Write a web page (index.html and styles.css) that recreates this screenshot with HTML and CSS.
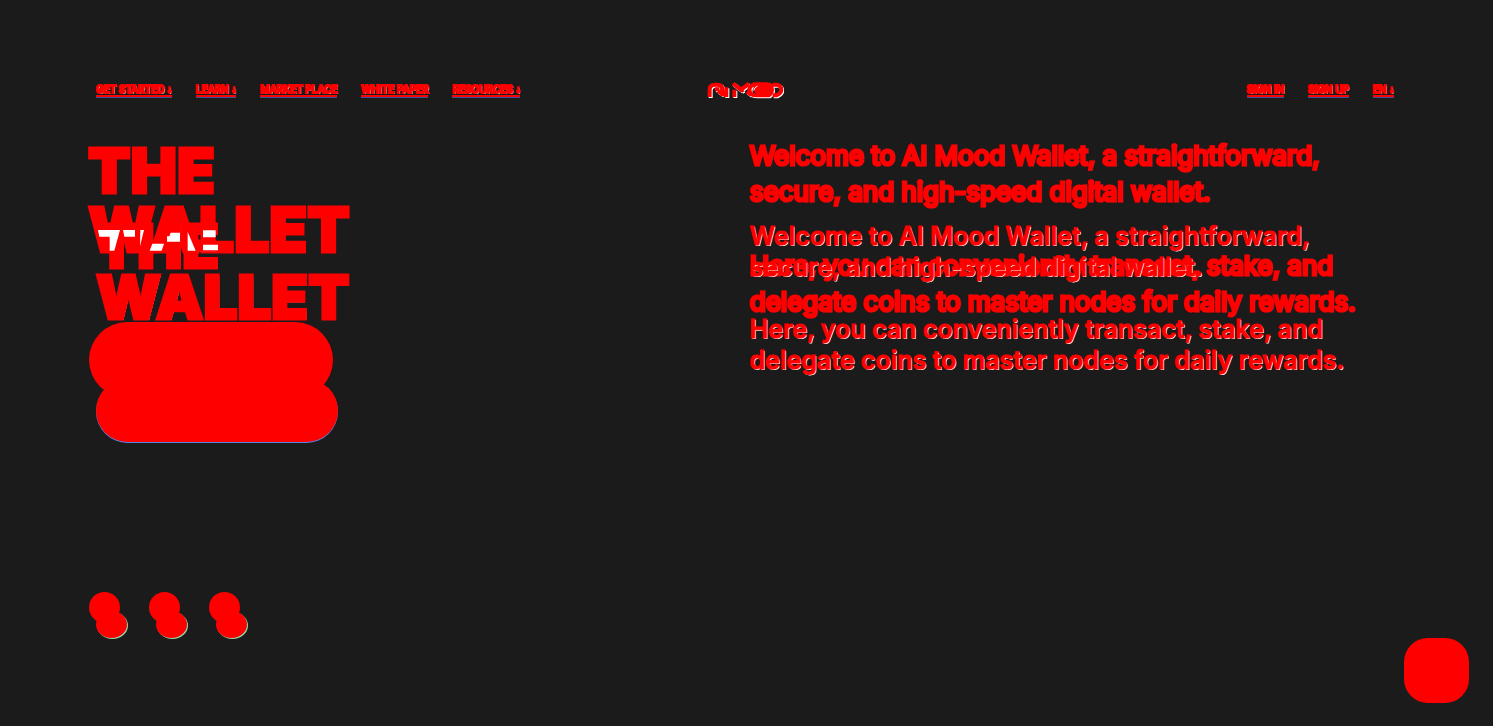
FILE: index.html
```html
<!DOCTYPE html>
<html lang="en">
<head>
<meta charset="utf-8">
<meta name="viewport" content="width=device-width, initial-scale=1">
<title>Ai Mood Wallet</title>
<link rel="stylesheet" href="styles.css">
</head>
<body>
<header class="bar">
  <nav class="nav" aria-label="Main">
    <a href="#start">GET STARTED <span class="arrow">↓</span></a>
    <a href="#learn">LEARN <span class="arrow">↓</span></a>
    <a href="#market">MARKET PLACE</a>
    <a href="#paper">WHITE PAPER</a>
    <a href="#resources">RESOURCES <span class="arrow">↓</span></a>
  </nav>
  <a class="logo" href="#home" aria-label="Ai Mood">
    <svg width="78" height="18" viewBox="48 34 234 54" fill="none">
      <defs>
        <g id="mark">
          <path d="M59 82V60Q59 45 75 45H83Q97 45 97 60V68M75 59H88M84 64L100 75"/>
          <path d="M109 82V53M133 82V60M129 42L153 60L177 42M153 64L160 60M171 66L184 76"/>
          <path d="M192 44Q178 50 178 60Q180 77 200 77H236Q246 70 246 60Q246 44 230 44Z"/>
          <path d="M248 45H260Q274 49 274 60T259 77H248"/>
        </g>
      </defs>
      <use href="#mark" class="mark-edge" x="3" y="3"/>
      <use href="#mark" class="mark"/>
      <path d="M84 62H109V80H92ZM192 44H230Q246 46 246 60T236 77H200L190 60Z" fill="#f00"/>
      <path d="M203 49Q193 52 191 63" stroke="#fff" stroke-width="3"/>
    </svg>
  </a>
  <nav class="nav account" aria-label="Account">
    <a href="#signin">SIGN IN</a>
    <a href="#signup">SIGN UP</a>
    <a href="#lang">EN <span class="arrow">↓</span></a>
  </nav>
</header>
<main class="hero">
  <section class="lead">
    <div class="stack">
      <h1 class="title">THE<br>WALLET</h1>
      <div class="title title-echo" aria-hidden="true">THE<br>WALLET</div>
      <svg class="overlap" width="120" height="22" viewBox="54 286 360 66" aria-hidden="true">
        <path fill="#fff" d="M54 286H120L103 348H89V306H58ZM129 286H165V306H133ZM181 286H192L180 335ZM217 327H252L245 348H209ZM272 294H300V321H261V305H268ZM323 291L347 348H323Z"/>
        <path fill="#fff" d="M369 287H407V308H369ZM369 330H414V347H369Z"/>
      </svg>
    </div>
    <div class="actions">
      <button class="pill" type="button" aria-label="Get the wallet"></button>
      <span class="pill-echo"></span>
    </div>
    <div class="socials">
      <a class="social" href="#one" aria-label="Community"></a>
      <a class="social" href="#two" aria-label="News"></a>
      <a class="social" href="#three" aria-label="Chat"></a>
    </div>
  </section>
  <section class="stack intro">
    <div class="copy">
      <p>Welcome to AI Mood Wallet, a straightforward,<br>secure, and high-speed digital wallet.</p>
      <p>Here, you can conveniently transact, stake, and<br>delegate coins to master nodes for daily rewards.</p>
    </div>
    <div class="copy copy-echo" aria-hidden="true">
      <p>Welcome to AI Mood Wallet, a straightforward,<br>secure, and high-speed digital wallet.</p>
      <p>Here, you can conveniently transact, stake, and<br>delegate coins to master nodes for daily rewards.</p>
    </div>
  </section>
</main>
<button class="chat" type="button" aria-label="Open chat"></button>
</body>
</html>
```
FILE: styles.css
```css
* { box-sizing: border-box; }
body {
  margin: 0;
  background: #1b1b1b;
  color: #f00;
  font-family: Inter, "Liberation Sans", sans-serif;
  font-optical-sizing: none;
}
.bar {
  display: grid;
  grid-template-columns: 1fr auto 1fr;
  align-items: center;
  padding: 81px 99px 0 96px;
}
.nav { display: flex; gap: 24px; }
.account { justify-content: flex-end; padding-top: 1px; }
.nav a {
  color: #f00;
  font-size: 10px;
  font-weight: 500;
  line-height: 11px;
  text-decoration: none;
  white-space: nowrap;
  -webkit-text-stroke: 2px #f00;
  text-shadow: 1px 1px 0 #fff;
  border-bottom: 2px solid #f00;
  box-shadow: 0 1px 0 #3b4f91;
}
.arrow { font-family: "Liberation Sans", sans-serif; font-size: 10px; }
.logo { display: block; height: 18px; }
.logo svg { display: block; }
.mark { stroke: #f00; stroke-width: 12px; }
.mark-edge { stroke: #fff; stroke-width: 12px; }
.hero {
  display: grid;
  grid-template-columns: 1fr 1fr;
  gap: 6px;
  padding: 39px 88px 0;
}
.lead { padding-top: 3px; }
.stack { display: grid; justify-items: start; align-items: start; }
.stack > * { grid-area: 1 / 1; }
.title {
  margin: 0;
  font-size: 62px;
  font-weight: 900;
  line-height: 59px;
  -webkit-text-stroke: 3px #f00;
}
.title-echo {
  padding: 80px 0 0 8px;
  font-size: 60px;
  line-height: 51px;
  text-shadow: 1px 1px 0 #fff;
}
.overlap { margin: 89px 0 0 10px; }
.actions { display: grid; justify-items: start; margin-top: -1px; }
.actions > * { grid-area: 1 / 1; }
.pill {
  width: 244px;
  height: 76px;
  margin-left: 1px;
  border: 0;
  border-radius: 38px;
  background: #f00;
}
.pill-echo {
  width: 242px;
  height: 63px;
  margin: 57px 0 0 8px;
  border-radius: 32px;
  background: #f00;
  box-shadow: 0 1px 0 #5b82dc;
}
.socials { display: flex; gap: 29px; margin: 150px 0 0 1px; }
.social {
  display: grid;
  width: 31px;
  height: 47px;
}
.social::before, .social::after {
  content: "";
  grid-area: 1 / 1;
  width: 31px;
  height: 31px;
  border-radius: 50%;
  background: #f00;
}
.social::after {
  height: 27px;
  margin: 19px 0 0 7px;
  box-shadow: 1px 1px 0 #8fd8a8;
}
.copy {
  font-size: 26px;
  font-weight: 400;
  line-height: 36px;
  -webkit-text-stroke: 3px #f00;
}
.copy p { margin: 0 0 38px; white-space: nowrap; }
.copy-echo {
  padding-top: 83px;
  font-size: 25px;
  font-weight: 600;
  line-height: 31px;
  -webkit-text-stroke: 1px #f00;
  text-shadow: 1px 1px 0 #fff;
}
.copy-echo p { margin-bottom: 31px; }
.chat {
  position: fixed;
  right: 24px;
  bottom: 23px;
  width: 65px;
  height: 65px;
  border: 0;
  border-radius: 24px;
  background: #f00;
}
```
